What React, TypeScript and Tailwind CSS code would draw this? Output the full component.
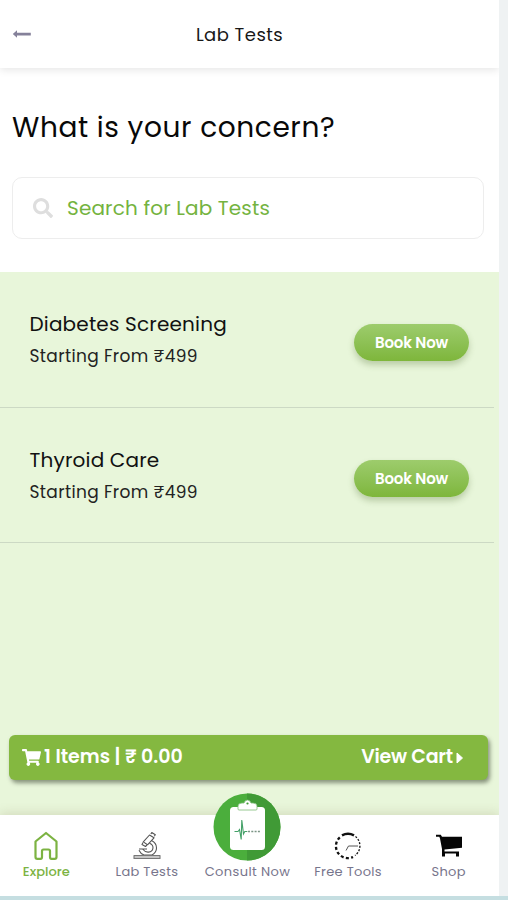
import { FaSearch, FaShoppingCart } from 'react-icons/fa';

const TESTS = [
  { name: 'Diabetes Screening', price: '₹499' },
  { name: 'Thyroid Care', price: '₹499' },
];

const BackIcon = () => (
  <svg width="20" height="10" viewBox="0 0 20 10" fill="none">
    <path d="M5 1.200 .8 5 5 8.800V6.500H18.800V3.700H5Z" fill="#85819a" />
  </svg>
);

const CaretIcon = () => (
  <svg width="8" height="12" viewBox="0 0 8 12">
    <path d="M1 1v10l5.500-5Z" fill="#fff" stroke="#fff" strokeLinejoin="round" />
  </svg>
);

const HomeIcon = () => (
  <svg width="26" height="30" viewBox="0 0 26 30" fill="none" stroke="#7cb342" strokeWidth="2.2" strokeLinejoin="round">
    <path d="M2.500 10.500 13 2l10.500 8.500v15.500q0 1.800-1.800 1.800H18.500Q17 27.800 17 26V20Q17 18.500 15.500 18.500H10.500Q9 18.500 9 20V26Q9 27.800 7.500 27.800H4.300Q2.500 27.800 2.500 26Z" />
  </svg>
);

const MicroscopeIcon = () => (
  <svg width="28" height="28" viewBox="0 0 28 28" fill="none" stroke="#555" strokeWidth="1.1" strokeLinejoin="round">
    <path d="m16.500 3 4.500 2.800-6.500 7-4.200-2.900Z" />
    <path d="m17.800 2 1-1.500 3.500 2.300-1 1.500M10 10.500 9 12.500l3.500 2 1.400-1.500M16.500 11.200c5 1.800 4.500 8.300-1 8.900-3 .3-4.500-1.200-6-3.100H6M18.500 8.600c7 3.500 6.200 11.500.5 14.400H11c-2.500-.8-4-2.400-5-4.700M7 17h7" />
    <path d="M1 23.500h26v3H1Z" fill="#c4c4c4" stroke="#777" />
  </svg>
);

const ClipboardIcon = () => (
  <svg width="68" height="68" viewBox="0 0 68 68" fill="none">
    <circle cx="34" cy="34" r="33.500" fill="#4bae3c" />
    <path d="M34 .5a33.500 33.500 0 0 1 0 67Z" fill="#409a36" />
    <rect x="17" y="14" width="35" height="43" rx="3.500" fill="#fff" />
    <path d="M25 16v-3q0-3 4-3h2q1-3 3.500-3T38 10h2q4 0 4 3v3q0 1-1 1H26q-1 0-1-1Z" fill="#fff" stroke="#7dbb77" strokeWidth=".8" />
    <circle cx="34.500" cy="10.500" r="1.100" fill="#409a36" />
    <path d="M21.500 38.500h3.500l1.500-2 1.700 10L28.800 27l1.700 14 1.300-2.500h2.500" stroke="#43a067" strokeWidth="1.100" />
    <path d="M35 38.500h12" stroke="#7b9585" strokeWidth="1.300" strokeDasharray="2 1.300" />
  </svg>
);

const ToolsIcon = () => (
  <svg width="28" height="28" viewBox="0 0 28 28" fill="none" stroke="#111">
    <path d="M8 3.300Q14 .2 20 3.300" strokeWidth="2.600" />
    <path d="M5.800 5.300A12 12 0 0 0 19 25" strokeWidth="2.300" strokeDasharray="3 2.300" />
    <path d="M21.500 4.500A12 12 0 0 1 21 23.500" strokeWidth="1.300" strokeDasharray="2 1.500" />
    <path d="M12 18.500 14.500 14H24" strokeWidth="1" stroke="#555" />
  </svg>
);

const ShopIcon = () => (
  <svg width="28" height="24" viewBox="0 0 28 24">
    <path d="M1 .8h4.800l1.200 2h20v11L9.500 15.400v2.200H24v5h-3v-3H10v3H7V15L5 4.500 4.300 2.800H1Z" fill="#050505" />
  </svg>
);

const NAV = [
  { label: 'Explore', icon: <HomeIcon />, className: 'text-[#7cb342] font-medium' },
  { label: 'Lab Tests', icon: <MicroscopeIcon />, className: 'text-[#77758c] tracking-[0.3px]' },
  { label: 'Consult Now', icon: <ClipboardIcon />, className: 'text-[#77758c] tracking-[0.4px]' },
  { label: 'Free Tools', icon: <ToolsIcon />, className: 'text-[#77758c] tracking-[0.3px]' },
  { label: 'Shop', icon: <ShopIcon />, className: 'text-[#77758c] tracking-[0.3px]' },
];

const TestRow = ({ test }: any) => (
  <div className="mr-[5px] flex h-[135.5px] items-center justify-between border-b border-[#ccd9c4] pr-[25px] pl-[29.5px]">
    <div className="pt-[2px]">
      <h2 className="text-[20px] leading-8 tracking-[0.18px] text-[#111]">{test.name}</h2>
      <p className="text-[17px] leading-8 tracking-[0.35px] text-[#222]">Starting From {test.price}</p>
    </div>
    <button className="mt-[7px] h-[37px] w-[115px] rounded-full bg-linear-to-b from-[#9dcc6c] to-[#7eb63b] pt-px text-[15px] font-semibold tracking-[-0.15px] text-white shadow-[0_4px_6px_rgba(80,110,50,0.3)]">
      Book Now
    </button>
  </div>
);

export default function App() {
  return (
    <div className="h-[900px] w-[508px] overflow-hidden bg-[#eff2f3] font-['Poppins','Inter','Noto_Sans',sans-serif]">
      <div className="flex h-[896px] w-[499px] flex-col overflow-hidden bg-white">
        <header className="flex h-[68px] shrink-0 items-center px-3 shadow-[0_2px_8px_rgba(0,0,0,0.1)]">
          <button aria-label="Back" className="w-5">
            <BackIcon />
          </button>
          <h1 className="flex-1 pr-[49px] pl-[9px] text-center text-[18px] tracking-[0.45px] text-[#181818]">Lab Tests</h1>
        </header>

        <section className="h-[204px] shrink-0 px-3 pt-[40px]">
          <h2 className="text-[28px] leading-10 tracking-[0.6px] text-[#080808]">What is your concern?</h2>
          <div className="mt-[29px] mr-[3px] flex h-[62px] items-center rounded-[10px] border border-[#ededed] pl-5">
            <FaSearch className="size-5 text-[#dedede]" />
            <span className="ml-[14px] text-[20px] tracking-[0.15px] text-[#74b340]">Search for Lab Tests</span>
          </div>
        </section>

        <main className="flex flex-1 flex-col bg-[#e8f6da]">
          {TESTS.map((test) => (
            <TestRow key={test.name} test={test} />
          ))}
          <div className="mt-auto mr-[11px] mb-[35px] ml-[9px] flex h-[45px] items-center justify-between rounded-md bg-[#84b840] pr-[24px] pl-[13px] text-[19px] font-semibold text-white shadow-[2px_3px_4px_rgba(70,80,60,0.6)]">
            <span className="flex items-center gap-[3px]">
              <FaShoppingCart className="size-[19px]" />
              1 Items | ₹ 0.00
            </span>
            <span className="flex items-center gap-[3px] tracking-[-0.2px]">
              View Cart
              <CaretIcon />
            </span>
          </div>
        </main>

        <nav className="relative h-[81px] shrink-0 bg-white shadow-[0_-2px_10px_rgba(120,100,60,0.18)]">
          <div className="-ml-1 flex w-[503px]">
            {NAV.map((item) => (
              <div key={item.label} className="flex h-[67px] flex-1 flex-col items-center justify-end">
                <div className={item.label === 'Consult Now' ? 'mb-[1px]' : 'mb-[1px] flex h-[30px] items-center'}>{item.icon}</div>
                <span className={`h-5 text-[13px] leading-5 whitespace-nowrap ${item.className}`}>{item.label}</span>
              </div>
            ))}
          </div>
        </nav>
      </div>
      <div className="h-1 bg-[#c5dee1]" />
    </div>
  );
}
